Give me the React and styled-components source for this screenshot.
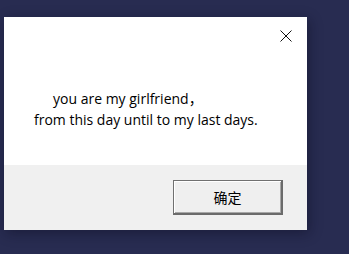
import styled, { createGlobalStyle } from "styled-components";

const GlobalStyle = createGlobalStyle`
  html, body {
    margin: 0;
    padding: 0;
    background: #282c51;
  }
  body {
    width: 349px;
    height: 254px;
    overflow: hidden;
  }
`;

const Desktop = styled.div`
  width: 349px;
  height: 254px;
  padding: 17px 0 0 4px;
  box-sizing: border-box;
  background: #282c51;
`;

const MessageBox = styled.div`
  position: relative;
  width: 303px;
  height: 213px;
  display: flex;
  flex-direction: column;
  background: #fff;
  box-shadow: 2px 3px 12px rgba(10, 12, 30, 0.45);
`;

const CloseButton = styled.button`
  position: absolute;
  top: 13px;
  right: 15px;
  width: 12px;
  height: 12px;
  padding: 0;
  border: none;
  background: none;
  display: flex;
`;

const Content = styled.div`
  height: 148px;
  padding: 71px 0 0 30px;
  box-sizing: border-box;
  font-family: "Open Sans", "Noto Sans CJK SC", sans-serif;
  font-size: 14px;
  line-height: 21px;
  color: #000;
`;

const Line = styled.div`
  padding-left: ${(p) => p.$indent || 0}px;
  white-space: nowrap;
`;

const Footer = styled.div`
  flex: 1;
  display: flex;
  justify-content: flex-end;
  align-items: flex-start;
  padding: 15px 24px 0 0;
  background: #f0f0f0;
`;

const OkButton = styled.button`
  width: 110px;
  height: 35px;
  box-sizing: border-box;
  border: 1px solid #707070;
  border-right: 2px solid #6b6b6b;
  border-bottom: 2px solid #6b6b6b;
  box-shadow: inset 1px 1px 0 #fff, inset -1px -1px 0 #a8a8a8;
  background: #efefef;
  font-family: "Noto Sans CJK SC", "Open Sans", sans-serif;
  font-size: 14px;
  color: #000;
  padding: 0 0 1px;
`;

export default function App() {
  return (
    <>
      <GlobalStyle />
      <Desktop>
        <MessageBox>
          <CloseButton aria-label="close">
            <svg width="12" height="12" viewBox="0 0 12 12">
              <path d="M0.5 0.5 L11.5 11.5 M11.5 0.5 L0.5 11.5" stroke="#111" strokeWidth="1" fill="none" />
            </svg>
          </CloseButton>
          <Content>
            <Line $indent={19}>you are my girlfriend，</Line>
            <Line>from this day until to my last days.</Line>
          </Content>
          <Footer>
            <OkButton>确定</OkButton>
          </Footer>
        </MessageBox>
      </Desktop>
    </>
  );
}
